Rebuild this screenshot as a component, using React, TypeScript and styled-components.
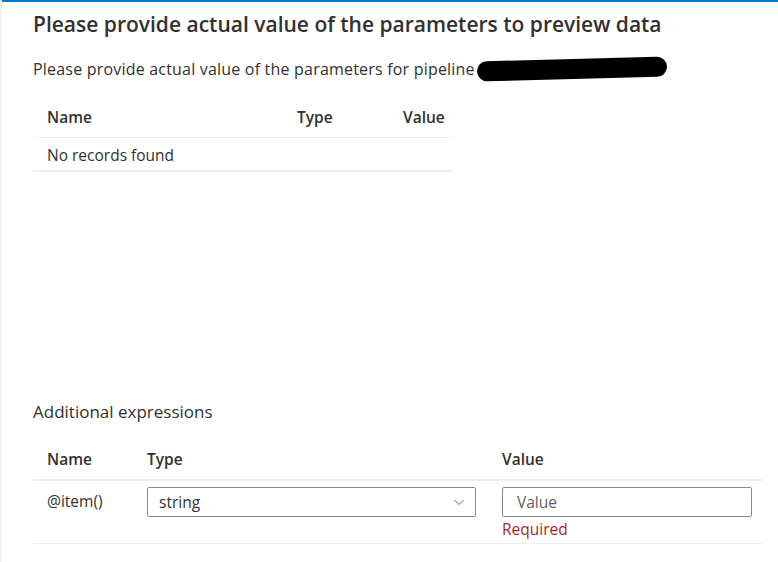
import styled, { createGlobalStyle } from 'styled-components'

const GlobalStyle = createGlobalStyle`
  html, body {
    margin: 0;
    padding: 0;
    background: #fff;
  }
  body {
    font-family: "Open Sans", "Noto Sans", sans-serif;
    color: #323130;
  }
`

const Frame = styled.div`
  width: 778px;
  height: 562px;
  display: flex;
  box-sizing: border-box;
  overflow: hidden;
`

const LeftRail = styled.div`
  width: 2px;
  background: #f0f0f0;
  flex-shrink: 0;
`

const Panel = styled.div`
  flex: 1;
  border-top: 2px solid #0078d4;
  padding: 8px 26px 0 31px;
  display: flex;
  flex-direction: column;
`

const Title = styled.h1`
  margin: 0;
  font-size: 21px;
  font-weight: 600;
  line-height: 28px;
  color: #323130;
`

const Intro = styled.p`
  margin: 21px 0 0;
  font-size: 16px;
  line-height: 20px;
  letter-spacing: 0.2px;
  display: flex;
  align-items: center;
`

const Redacted = styled.span`
  display: inline-block;
  width: 190px;
  height: 20px;
  margin-left: 2px;
  background: #000;
  border-radius: 10px;
  transform: rotate(-1.5deg);
`

const Table = styled.div<{ width: number; columns: string }>`
  width: ${p => p.width}px;
  display: grid;
  grid-template-columns: ${p => p.columns};
`

const HeadCell = styled.div<{ thick?: boolean }>`
  font-size: 15.5px;
  font-weight: 600;
  height: 40px;
  line-height: 40px;
  padding-left: 14px;
  border-bottom: ${p => (p.thick ? 2 : 1)}px solid #efeeed;
`

const Cell = styled.div`
  font-size: 15.5px;
  padding-left: 14px;
`

const EmptyRow = styled(Cell)`
  grid-column: 1 / -1;
  height: 32px;
  line-height: 34px;
  border-bottom: 2px solid #efeeed;
`

const Spacer = styled.div`
  height: 229px;
`

const Section = styled.h2`
  margin: 0;
  font-size: 17px;
  font-weight: 400;
  line-height: 22px;
`

const DataRow = styled.div`
  display: contents;
`

const RowCell = styled(Cell)`
  padding-top: 6px;
  height: 63px;
  border-bottom: 1px solid #efeeed;
  box-sizing: border-box;
`

const NameText = styled.div`
  line-height: 24px;
  padding-top: 2px;
`

const Dropdown = styled.div`
  width: 329px;
  height: 30px;
  box-sizing: border-box;
  border: 1px solid #8a8886;
  border-radius: 2px;
  display: flex;
  align-items: center;
  justify-content: space-between;
  padding: 0 10px 0 11px;
  font-size: 15.5px;
  color: #323130;
`

const Input = styled.div`
  width: 250px;
  height: 30px;
  box-sizing: border-box;
  border: 1px solid #8a8886;
  border-radius: 2px;
  display: flex;
  align-items: center;
  padding-left: 14px;
  font-size: 15.5px;
  color: #605e5c;
`

const ErrorText = styled.div`
  margin-top: 2px;
  font-size: 15.5px;
  line-height: 20px;
  color: #a4262c;
`

const Chevron = () => (
  <svg width="12" height="12" viewBox="0 0 12 12">
    <path d="M1.5 4 L6 8.5 L10.5 4" fill="none" stroke="#605e5c" strokeWidth="1" />
  </svg>
)

export default function App() {
  return (
    <>
      <GlobalStyle />
      <Frame>
        <LeftRail />
        <Panel>
          <Title>Please provide actual value of the parameters to preview data</Title>
          <Intro>
            Please provide actual value of the parameters for pipeline
            <Redacted />
          </Intro>
          <Table width={420} columns="250px 106px 1fr" style={{ marginTop: 18 }}>
            <HeadCell>Name</HeadCell>
            <HeadCell>Type</HeadCell>
            <HeadCell>Value</HeadCell>
            <EmptyRow>No records found</EmptyRow>
          </Table>
          <Spacer />
          <Section>Additional expressions</Section>
          <Table width={729} columns="100px 355px 1fr" style={{ marginTop: 16 }}>
            <HeadCell thick>Name</HeadCell>
            <HeadCell thick>Type</HeadCell>
            <HeadCell thick>Value</HeadCell>
            <DataRow>
              <RowCell>
                <NameText>@item()</NameText>
              </RowCell>
              <RowCell>
                <Dropdown>
                  string
                  <Chevron />
                </Dropdown>
              </RowCell>
              <RowCell>
                <Input>Value</Input>
                <ErrorText>Required</ErrorText>
              </RowCell>
            </DataRow>
          </Table>
        </Panel>
      </Frame>
    </>
  )
}
